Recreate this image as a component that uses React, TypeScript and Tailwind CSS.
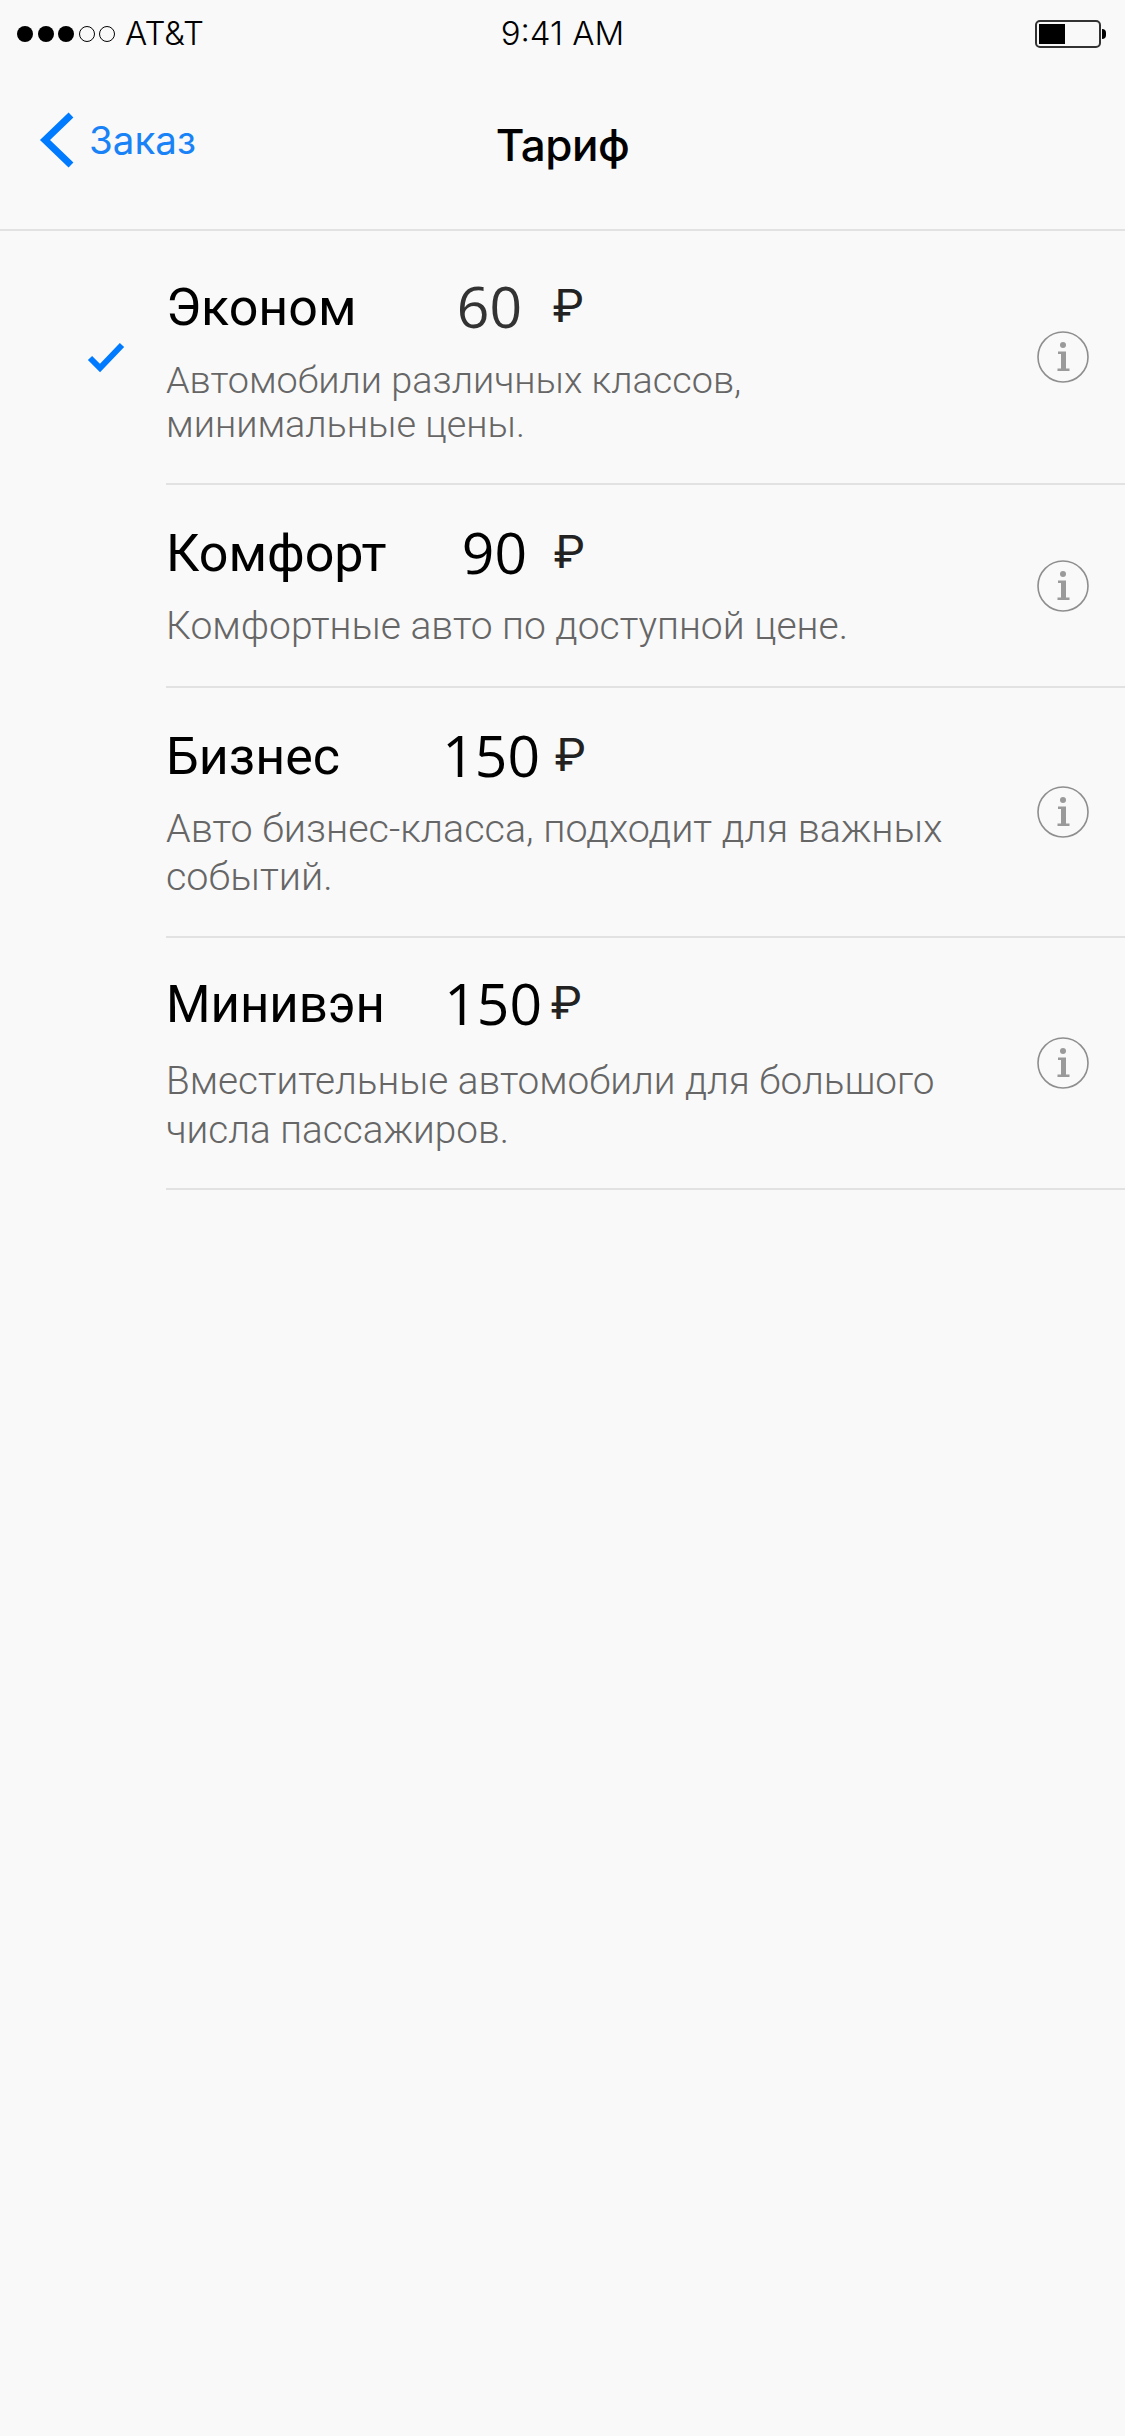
const rows = [
  { name: "Эконом", price: "60", desc: ["Автомобили различных классов,", "минимальные цены."], h: "h-[254px]", cw: "w-[356px]", gap: "ml-[31px]", check: true, titleTop: "pt-[45px]", nm: "text-[52px]", sub: "mt-[22px] text-[37.800px] leading-[44px]", pc: "text-[#333]" },
  { name: "Комфорт", price: "90", desc: ["Комфортные авто по доступной цене."], h: "h-[203px]", cw: "w-[361px]", gap: "ml-[27px]", check: false, titleTop: "pt-[37px]", nm: "text-[52px]", sub: "mt-[21px] text-[39px] leading-[47px]", pc: "text-black" },
  { name: "Бизнес", price: "150", desc: ["Авто бизнес-класса, подходит для важных", "событий."], h: "h-[250px]", cw: "w-[374px]", gap: "ml-[15px]", check: false, titleTop: "pt-[37px]", nm: "text-[52px]", sub: "mt-[20px] text-[39.500px] leading-[48px]", pc: "text-black" },
  { name: "Минивэн", price: "150", desc: ["Вместительные автомобили для большого", "числа пассажиров."], h: "h-[252px]", cw: "w-[376px]", gap: "ml-[9px]", check: false, titleTop: "pt-[35px]", nm: "text-[51px]", sub: "mt-[23px] text-[38.700px] leading-[49px]", pc: "text-black" },
];

function Info() {
  return (
    <svg width="52" height="52" viewBox="0 0 52 52" className="shrink-0">
      <circle cx="26" cy="26" r="25" fill="none" stroke="#8e8e8e" strokeWidth="1.6" />
      <circle cx="26" cy="14" r="3" fill="#9a9a9a" />
      <path d="M21 20.500h8v17h3.500v2.500h-12v-2.500h3.500v-14.500h-3z" fill="#9a9a9a" />
    </svg>
  );
}

export default function App() {
  return (
    <div className="w-[1125px] h-[2436px] bg-[#f9f9f9] font-['Roboto',sans-serif] overflow-hidden">
      <div className="h-[231px] border-b-2 border-[#e2e2e2] flex flex-col">
        <div className="h-[68px] grid grid-cols-3 items-center px-[17px] font-['Inter',sans-serif] text-black">
          <div className="flex items-center">
            <div className="flex gap-[4.500px]">
              <span className="w-[16px] h-[16px] rounded-full bg-black" />
              <span className="w-[16px] h-[16px] rounded-full bg-black" />
              <span className="w-[16px] h-[16px] rounded-full bg-black" />
              <span className="w-[16px] h-[16px] rounded-full border-[1.5px] border-black" />
              <span className="w-[16px] h-[16px] rounded-full border-[1.5px] border-black" />
            </div>
            <span className="ml-[10px] text-[33px] font-light">AT&amp;T</span>
          </div>
          <div className="text-center font-light text-[33px]">9:41 AM</div>
          <div className="flex justify-end items-center pr-[2px]">
            <div className="w-[66px] h-[28px] rounded-[5px] border-2 border-[#333] p-[2px] flex">
              <div className="w-[26px] h-full bg-black" />
            </div>
            <div className="w-[4px] h-[10px] bg-black rounded-r-full ml-[1px]" />
          </div>
        </div>
        <div className="flex-1 relative flex items-start">
          <div className="flex items-center pl-[39px] pt-[44px]">
            <svg width="36" height="56" viewBox="0 0 36 56" className="shrink-0">
              <path d="M32 3 L6 28 L32 53" fill="none" stroke="#007aff" strokeWidth="7" />
            </svg>
            <span className="ml-[14px] text-[38.500px] leading-[48px] text-[#1a82f7] font-['Inter',sans-serif] font-normal">Заказ</span>
          </div>
          <div className="absolute left-0 right-0 top-[48px] text-center text-[44px] leading-[58px] font-medium text-black font-['Inter',sans-serif] tracking-[-0.5px]">
            Тариф
          </div>
        </div>
      </div>
      {rows.map((r) => (
        <div key={r.name} className={`flex ${r.h}`}>
          <div className="w-[166px] shrink-0 flex items-center justify-start pl-[87px]">
            {r.check && (
              <svg width="38" height="32" viewBox="0 0 38 32" className="mt-[-2px]">
                <path d="M3 17 L13 27 L35 4" fill="none" stroke="#007aff" strokeWidth="6" />
              </svg>
            )}
          </div>
          <div className="flex-1 flex items-center border-b-2 border-[#e2e2e2] pr-[36px]">
            <div className={`flex-1 self-start ${r.titleTop}`}>
              <div className="flex items-center h-[60px]">
                <div className={`${r.cw} flex justify-between items-center`}>
                  <span className={`${r.nm} leading-[60px] pt-[4px] text-black`}>{r.name}</span>
                  <span className={`text-[57px] leading-[60px] ${r.pc} font-['Open_Sans',sans-serif]`}>{r.price}</span>
                </div>
                <span className={`${r.gap} text-[46px] leading-[60px] text-[#222]`}>₽</span>
              </div>
              <div className={`${r.sub} font-light text-[#666]`}>
                {r.desc.map((d) => (
                  <div key={d}>{d}</div>
                ))}
              </div>
            </div>
            <Info />
          </div>
        </div>
      ))}
    </div>
  );
}
